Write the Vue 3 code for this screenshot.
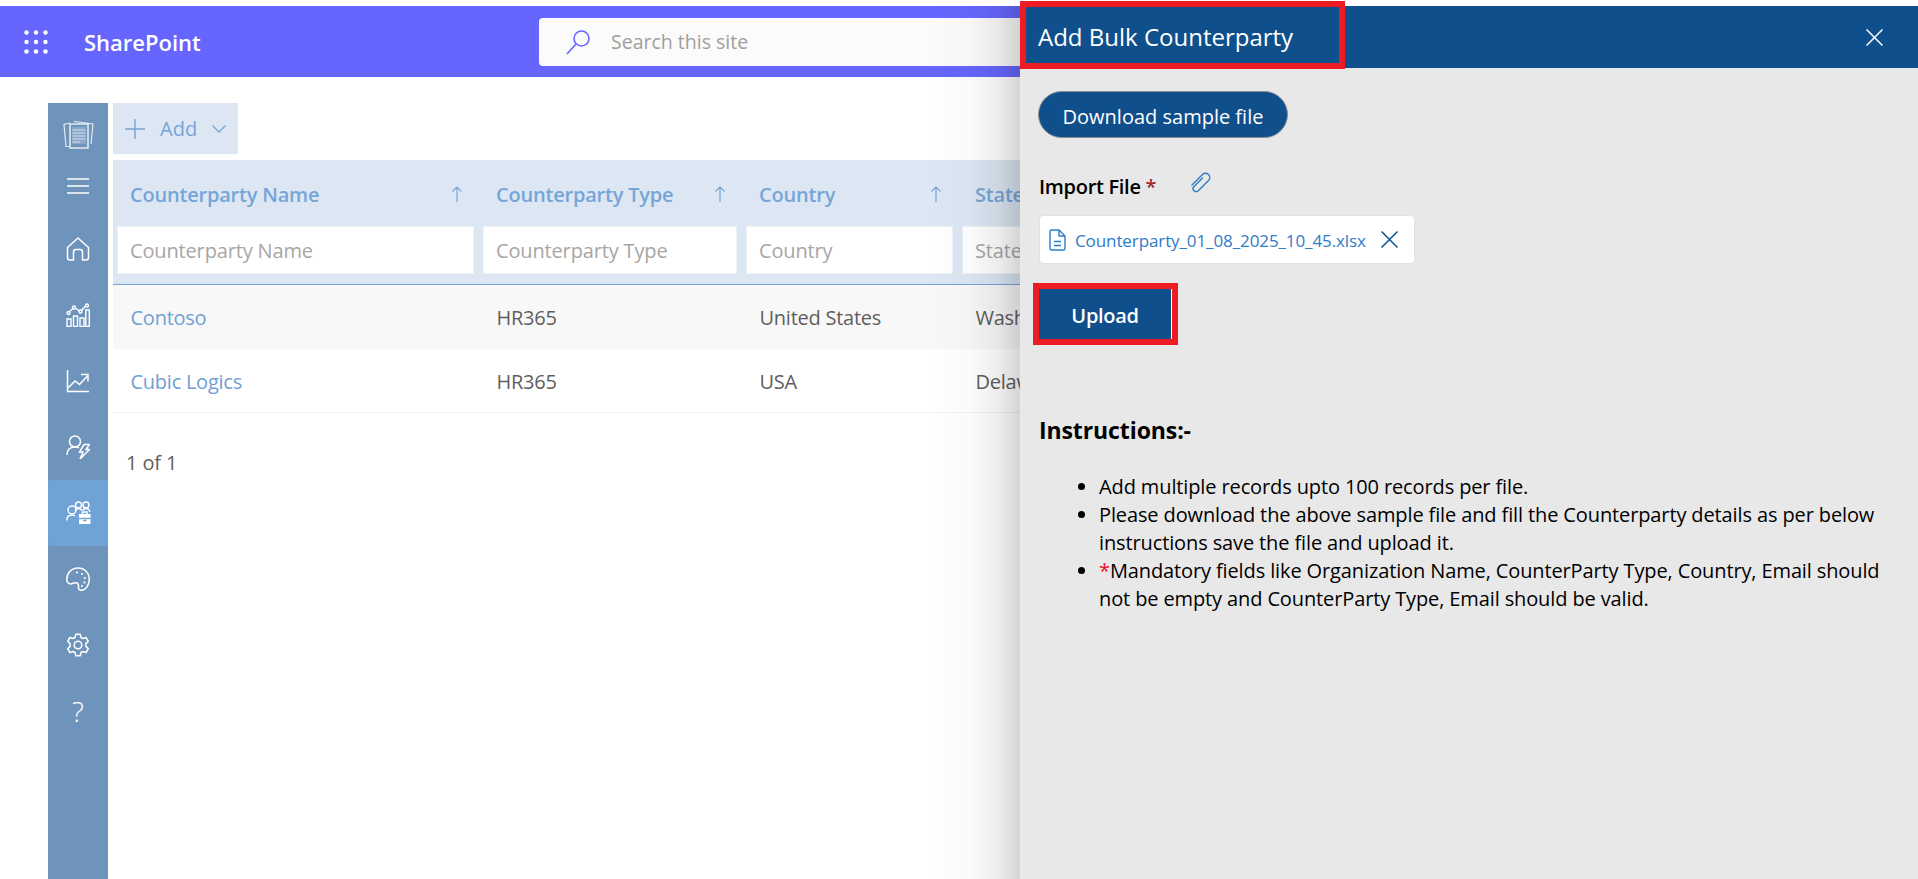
<script setup>
const columns = [
  { name: 'Counterparty Name', width: 366 },
  { name: 'Counterparty Type', width: 263 },
  { name: 'Country', width: 216 },
  { name: 'State', width: 240 }
]
const rows = [
  ['Contoso', 'HR365', 'United States', 'Washington'],
  ['Cubic Logics', 'HR365', 'USA', 'Delaware']
]
</script>

<template>
  <div class="page">
    <header class="topbar">
      <svg class="waffle" width="24" height="24" viewBox="0 0 24 24" fill="#fff">
        <circle cx="2.5" cy="2.5" r="2.2" /><circle cx="12" cy="2.5" r="2.2" /><circle cx="21.5" cy="2.5" r="2.2" />
        <circle cx="2.5" cy="12" r="2.2" /><circle cx="12" cy="12" r="2.2" /><circle cx="21.5" cy="12" r="2.2" />
        <circle cx="2.5" cy="21.5" r="2.2" /><circle cx="12" cy="21.5" r="2.2" /><circle cx="21.5" cy="21.5" r="2.2" />
      </svg>
      <span class="brand">SharePoint</span>
      <div class="search">
        <svg class="search-icon" width="26" height="26" viewBox="0 0 26 26" fill="none" stroke="#6666ff" stroke-width="1.6">
          <circle cx="16.5" cy="9.5" r="7.5" />
          <path d="M11 15 2 25" />
        </svg>
        <span class="search-text">Search this site</span>
      </div>
    </header>

    <div class="workspace">
      <nav class="rail">
        <div class="rail-top">
          <svg width="32" height="32" viewBox="0 0 32 32" fill="none" stroke="#fff" stroke-opacity=".8" stroke-width="1.2">
            <path d="M8 5 2 6.500l2 22h3" />
            <path d="M12 3.500 31 6l-2 20" />
            <path d="M8 6h18v24H8z" stroke-width="1.600" fill="#6f94bb" />
            <path d="M10.500 9h13v17h-13z" fill="#fff" fill-opacity=".2" stroke="none" />
            <path d="M10 12h14M10 15h14M10 18h14M10 21h14M10 24h8" stroke-width="1.200" stroke-opacity=".6" />
          </svg>
          <svg class="burger" width="22" height="16" viewBox="0 0 22 16" stroke="#fff" stroke-width="1.300">
            <path d="M0 1h22M0 8h22M0 15h22" />
          </svg>
        </div>
        <div class="rail-item">
          <svg width="24" height="24" viewBox="0 0 24 24" fill="none" stroke="#fff" stroke-width="1.500" stroke-linejoin="round">
            <path d="M1.500 10.500 12 1l10.500 9.500v10a2.500 2.500 0 0 1-2.500 2.500h-3.500v-8a2.500 2.500 0 0 0-2.500-2.500h-4a2.500 2.500 0 0 0-2.500 2.500v8H4a2.500 2.500 0 0 1-2.500-2.500z" />
          </svg>
        </div>
        <div class="rail-item">
          <svg width="24" height="24" viewBox="0 0 24 24" fill="none" stroke="#fff" stroke-width="1.400">
            <path d="M1 16h4v7.500H1zM7.500 13h4v10.500h-4zM14 15h4v8.500h-4zM19.800 7h3.500v16.500h-3.500z" />
            <path d="M2.500 9.500 8 4.500l6.500 4 6-6.500" />
            <circle cx="2.500" cy="10" r="1.500" fill="#6f94bb" /><circle cx="8" cy="4.500" r="1.500" fill="#6f94bb" />
            <circle cx="14.500" cy="8.500" r="1.500" fill="#6f94bb" /><circle cx="21" cy="2.500" r="1.500" fill="#6f94bb" />
          </svg>
        </div>
        <div class="rail-item">
          <svg width="24" height="24" viewBox="0 0 24 24" fill="none" stroke="#fff" stroke-width="1.500">
            <path d="M1.500 1v21.500H23" />
            <path d="M2 19l7-7 4.500 3.500 8-8.500" />
            <path d="M15 5.500h7v7" />
          </svg>
        </div>
        <div class="rail-item">
          <svg width="24" height="24" viewBox="0 0 24 24" fill="none" stroke="#fff" stroke-width="1.500">
            <circle cx="9" cy="6.500" r="5.500" />
            <path d="M1 20c0-5 3-8 8-8 1.500 0 3 .3 4 1" />
            <path d="M18 9.500h5.500L20 14.500h3.500L14 24l3-7h-3.500z" fill="none" />
          </svg>
        </div>
        <div class="rail-item rail-item-active">
          <svg width="25" height="24" viewBox="0 0 25 24" fill="none" stroke="#fff" stroke-width="1.400">
            <circle cx="6" cy="9" r="4" />
            <path d="M0.800 19.500c0-3.500 2-5.500 5.200-5.500 1.200 0 2.200.3 3 .8" />
            <circle cx="12.500" cy="4" r="3" /><circle cx="20" cy="4" r="3" />
            <path d="M9 10c1-1.500 2-2.500 3.500-2.500s2.500.8 3.500 2M16.500 9.500c.8-1.300 2-2 3.500-2 2 0 3.500 1.500 4 3.500" />
            <path d="M13 13h11.500v10H13z" fill="#fff" stroke="none" />
            <path d="M16.500 13v-2h4.500v2" />
            <path d="M13 17.500h11.500" stroke="#6fa3d6" />
            <path d="M17 19.500h3.500" stroke="#6fa3d6" />
          </svg>
        </div>
        <div class="rail-item">
          <svg width="24" height="24" viewBox="0 0 24 24" fill="none" stroke="#fff" stroke-width="1.500">
            <path d="M12 1c6.500 0 11.300 4.800 11.300 11.300 0 5.700-3.500 11-8 11-2.500 0-3-1.800-2.800-3.800.2-2.300-.8-3.800-3-3.800-2 0-3.200 1.200-5 1.200C2.400 16.900.8 15 .8 12.500.8 6 5.500 1 12 1z" />
            <circle cx="11" cy="5.500" r="1.100" fill="#fff" stroke="none" /><circle cx="16" cy="7" r="1.100" fill="#fff" stroke="none" />
            <circle cx="18.800" cy="11" r="1.100" fill="#fff" stroke="none" /><circle cx="18.500" cy="15.500" r="1.100" fill="#fff" stroke="none" />
            <circle cx="16" cy="19" r="1.100" fill="#fff" stroke="none" />
          </svg>
        </div>
        <div class="rail-item">
          <svg width="24" height="24" viewBox="0 0 24 24" fill="none" stroke="#fff" stroke-width="1.500" stroke-linejoin="round">
            <circle cx="12" cy="12" r="3.800" />
            <path d="M9.800 1.200h4.400l.8 3.300 1.900 1 3.200-1 2.200 3.800-2.400 2.300v2.800l2.400 2.300-2.200 3.800-3.200-1-1.900 1-.8 3.300H9.800L9 19.500l-1.900-1-3.200 1-2.200-3.800 2.400-2.300v-2.800L1.700 8.300l2.200-3.800 3.200 1 1.900-1z" />
          </svg>
        </div>
        <div class="rail-item rail-help">?</div>
      </nav>

      <main class="content">
        <div class="toolbar">
          <div class="add-btn">
            <svg width="20" height="20" viewBox="0 0 20 20" stroke="#76a5d8" stroke-width="1.400"><path d="M10 0v20M0 10h20" /></svg>
            <span class="add-label">Add</span>
            <svg width="14" height="8" viewBox="0 0 14 8" fill="none" stroke="#76a5d8" stroke-width="1.300"><path d="M.5.500 7 7 13.500.500" /></svg>
          </div>
        </div>

        <div class="table">
          <div class="thead">
            <div v-for="col in columns" :key="col.name" class="th" :style="{ width: col.width + 'px' }">
              <div class="th-title">
                <span class="th-name">{{ col.name }}</span>
                <svg class="sort" width="10" height="16" viewBox="0 0 10 16" fill="none" stroke="#76a5d8" stroke-width="1.200"><path d="M5 16V1M.5 5.500 5 1l4.500 4.500" /></svg>
              </div>
              <div class="filter">{{ col.name }}</div>
            </div>
          </div>
          <div v-for="(row, i) in rows" :key="row[0]" class="tr" :class="i === 0 ? 'tr-alt' : 'tr-plain'">
            <div
              v-for="(cell, j) in row"
              :key="j"
              class="td"
              :class="{ 'td-link': j === 0 }"
              :style="{ width: columns[j].width + 'px' }"
            >{{ cell }}</div>
          </div>
        </div>
        <div class="pager">1 of 1</div>
      </main>
    </div>

    <div class="shade"></div>

    <aside class="panel">
      <div class="panel-head">
        <h1 class="panel-title">Add Bulk Counterparty</h1>
        <svg class="panel-close" width="17" height="17" viewBox="0 0 17 17" stroke="#fff" stroke-width="1.500"><path d="M.5.500l16 16M16.500.500l-16 16" /></svg>
        <div class="mark mark-title"></div>
      </div>
      <div class="panel-body">
        <button class="sample-btn" type="button">Download sample file</button>
        <div class="import-row">
          <span class="import-label">Import File <span class="req">*</span></span>
          <svg class="clip" width="22" height="24" viewBox="0 0 22 24" fill="none" stroke="#2f7cc7" stroke-width="1.400" stroke-linecap="round">
            <path d="M13.500 7 5 15.500a3 3 0 0 0 4.300 4.300L19.500 9.500a4.200 4.200 0 0 0-6-6L3 14" />
          </svg>
        </div>
        <div class="file-box">
          <svg width="17" height="22" viewBox="0 0 17 22" fill="none" stroke="#2f7cc7" stroke-width="1.400" stroke-linejoin="round">
            <path d="M1 2.500A1.500 1.500 0 0 1 2.500 1H10l6 6v12.500a1.500 1.500 0 0 1-1.500 1.500h-12A1.500 1.500 0 0 1 1 19.500zM10 1v6h6M5 12.500h7M5 16.500h7" />
          </svg>
          <span class="file-name">Counterparty_01_08_2025_10_45.xlsx</span>
          <svg width="17" height="17" viewBox="0 0 17 17" stroke="#0f4f8b" stroke-width="1.500"><path d="M.5.500l16 16M16.500.500l-16 16" /></svg>
        </div>
        <button class="upload-btn" type="button">Upload</button>
        <h2 class="instr-title">Instructions:-</h2>
        <ul class="instr-list">
          <li>Add multiple records upto 100 records per file.</li>
          <li>Please download the above sample file and fill the Counterparty details as per below instructions save the file and upload it.</li>
          <li><span class="star">*</span>Mandatory fields like Organization Name, CounterParty Type, Country, Email should not be empty and CounterParty Type, Email should be valid.</li>
        </ul>
      </div>
    </aside>
  </div>
</template>

<style>
html, body { margin: 0; background: #fff; overflow: hidden; }
</style>

<style scoped>
.page {
  position: relative;
  width: 1918px;
  height: 879px;
  overflow: hidden;
  padding-top: 6px;
  box-sizing: border-box;
  background: #fff;
  font-family: "Open Sans", "Noto Sans", sans-serif;
}
.topbar {
  height: 71px;
  background: #6666ff;
  display: flex;
  align-items: center;
  padding-left: 24px;
}
.waffle { flex: none; }
.brand {
  margin-left: 36px;
  width: 150px;
  margin-right: 305px;
  color: #fff;
  font-size: 22px;
  font-weight: 600;
  flex: none;
}
.search {
  width: 800px;
  height: 48px;
  background: #fbfbfb;
  border-radius: 4px;
  display: flex;
  align-items: center;
  flex: none;
}
.search-icon { margin-left: 26px; }
.search-text {
  margin-left: 20px;
  color: #a19f9d;
  font-size: 19.5px;
}
.workspace {
  display: flex;
  padding: 26px 0 0 48px;
  height: 802px;
  box-sizing: border-box;
}
.rail {
  width: 60px;
  flex: none;
  background: #6f94bb;
  display: flex;
  flex-direction: column;
}
.rail-top {
  height: 113px;
  padding-top: 15px;
  box-sizing: border-box;
  display: flex;
  flex-direction: column;
  align-items: center;
}
.burger { margin-top: 28px; }
.rail-item {
  height: 66px;
  display: flex;
  align-items: center;
  justify-content: center;
  flex: none;
}
.rail-item-active {
  background: #6fa3d6;
  border-radius: 3px;
}
.rail-help {
  color: #fff;
  font-size: 28px;
  font-weight: 300;
}
.content {
  margin-left: 5px;
  width: 907px;
  flex: none;
  overflow: hidden;
}
.toolbar { display: flex; height: 57px; }
.add-btn {
  width: 125px;
  height: 51px;
  background: #dce7f3;
  display: flex;
  align-items: center;
  padding-left: 12px;
  box-sizing: border-box;
  color: #76a5d8;
}
.add-label {
  margin-left: 15px;
  margin-right: 15px;
  font-size: 20px;
}
.table { width: 1085px; }
.thead {
  display: flex;
  height: 124px;
  background: #dce7f3;
  border-bottom: 1px solid #74a4d8;
  box-sizing: content-box;
}
.th {
  flex: none;
  box-sizing: border-box;
  padding: 0 6px 0 5px;
}
.th-title {
  height: 67px;
  display: flex;
  align-items: center;
  justify-content: space-between;
  padding: 2px 11px 0 12px;
  box-sizing: border-box;
}
.th-name {
  color: #76a5d8;
  font-size: 20px;
  font-weight: 600;
  letter-spacing: -0.2px;
}
.sort { margin-top: -2px; }
.filter {
  height: 46px;
  background: #fff;
  color: #a8a6a4;
  font-size: 20px;
  line-height: 48px;
  padding-left: 12px;
  letter-spacing: -0.15px;
  box-shadow: 0 0 0 1px #edf2f8;
}
.tr {
  display: flex;
  box-sizing: content-box;
  align-items: center;
}
.tr-alt {
  background: #f8f8f8;
  height: 64px;
}
.tr-plain {
  height: 62px;
  padding-top: 1px;
  border-bottom: 1px solid #f3f2f1;
}
.td {
  flex: none;
  box-sizing: border-box;
  padding-left: 17.500px;
  color: #605e5c;
  font-size: 20px;
  letter-spacing: -0.25px;
  white-space: nowrap;
}
.td-link { color: #6fa0d4; }
.pager {
  width: fit-content;
  margin: 32px 0 0 13px;
  color: #605e5c;
  font-size: 20px;
  line-height: 36px;
  letter-spacing: -0.1px;
}
.shade {
  position: absolute;
  left: 930px;
  width: 90px;
  top: 6px;
  bottom: 0;
  background: linear-gradient(to right, rgba(0,0,0,0) 0%, rgba(0,0,0,.02) 45%, rgba(0,0,0,.07) 75%, rgba(0,0,0,.17) 100%);
}
.panel {
  position: absolute;
  left: 1020px;
  right: 0;
  top: 6px;
  bottom: 0;
  background: #e8e8e8;
  color: #000;
}
.panel-head {
  position: relative;
  height: 62px;
  background: #0f4f8b;
  display: flex;
  align-items: center;
  justify-content: space-between;
  padding: 0 35px 0 18px;
}
.panel-title {
  margin: -2px 0 0;
  color: #fff;
  font-size: 24px;
  font-weight: 400;
}
.mark {
  position: absolute;
  border: 6px solid #ed1c24;
  box-sizing: border-box;
}
.mark-title {
  left: 0;
  top: -5px;
  width: 325px;
  height: 68px;
}
.panel-body { padding: 23px 28px 0 18px; }
.sample-btn {
  display: block;
  width: 250px;
  height: 47px;
  border-radius: 24px;
  border: 1px solid #8a8f96;
  background: #0f4f8b;
  color: #fff;
  font: inherit;
  font-size: 20px;
  padding: 3px 0 0;
}
.import-row {
  margin-top: 33px;
  height: 30px;
  display: flex;
  align-items: center;
}
.import-label {
  margin-left: 1px;
  font-size: 20px;
  font-weight: 600;
  letter-spacing: -0.3px;
  width: 150px;
}
.req { color: #a4262c; }
.clip { margin-top: -6px; }
.file-box {
  margin: 14px 0 0 1px;
  width: 376px;
  height: 49px;
  background: #fff;
  border: 1px solid #e1e1e1;
  border-radius: 4px;
  box-sizing: border-box;
  display: flex;
  align-items: center;
  padding-left: 9px;
}
.file-name {
  margin-left: 9px;
  margin-right: 15px;
  padding-top: 2px;
  width: 291px;
  flex: none;
  color: #2f7cc7;
  font-size: 17px;
  letter-spacing: -0.1px;
  white-space: nowrap;
}
.upload-btn {
  display: block;
  margin: 25px 0 0 1px;
  width: 133px;
  height: 50px;
  padding: 2px 0 0;
  border: none;
  border-right: 1px solid #fff;
  background: #0f4f8b;
  color: #fff;
  font: inherit;
  font-size: 20px;
  font-weight: 600;
  outline: 6px solid #ed1c24;
  letter-spacing: -0.3px;
}
.instr-title {
  margin: 76px 0 0 1px;
  font-size: 23px;
  line-height: 30px;
  font-weight: 700;
  letter-spacing: -0.1px;
}
.instr-list {
  margin: 28px 0 0;
  padding: 0 0 0 61px;
  font-size: 20px;
  line-height: 28px;
  letter-spacing: -0.12px;
}
.star { color: #e81123; }
</style>
